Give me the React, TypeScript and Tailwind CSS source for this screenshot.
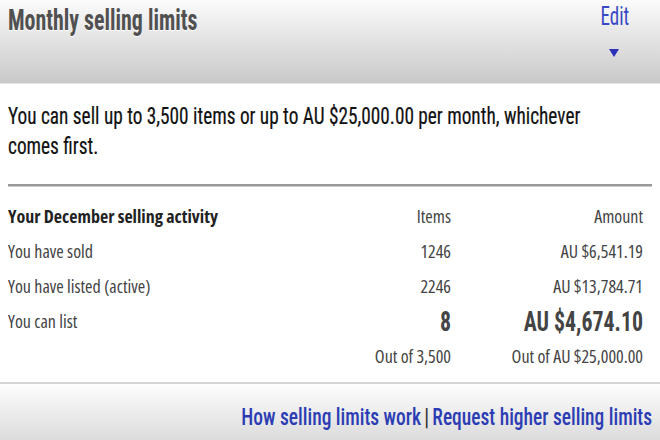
export default function App() {
  return (
    <div className="w-[660px] h-[440px] bg-white flex flex-col overflow-hidden font-['Roboto_Condensed','Roboto',sans-serif]">
      <div className="h-[84px] shrink-0 bg-gradient-to-b from-[#fbfbfb] to-[#c9c9c9] border-b border-[#e4e4e4] flex justify-between pl-2 pr-[26px]">
        <div className="pt-[2px] text-[30px] leading-[36px] font-bold text-[#505050] [text-shadow:0_1px_0_#fff]">
          <span className="inline-block origin-left scale-x-[0.73]">Monthly selling limits</span>
        </div>
        <div className="flex flex-col items-center pt-[3px]">
          <span className="inline-block scale-x-[0.76] text-[25px] leading-[28px] text-[#3747c4]">Edit</span>
          <svg width="10" height="8" viewBox="0 0 10 8" className="mt-[18px] -ml-[3px]">
            <polygon points="0,0 10,0 5,8" fill="#2a30b8" />
          </svg>
        </div>
      </div>
      <div className="px-2 pt-[17px]">
        <div className="w-[730px] origin-left scale-x-[0.803] text-[24px] leading-[30px] text-[#111] [-webkit-text-stroke:0.2px_#111]">
          You can sell up to 3,500 items or up to AU $25,000.00 per month, whichever comes first.
        </div>
      </div>
      <div className="mx-2 mt-[23px] h-[3px] bg-[#999] border-b border-[#ccc]" />
      <div className="grid grid-cols-[1fr_90px_192px] pl-2 pr-[17px] pt-[12px] font-['Open_Sans',sans-serif] font-stretch-75% text-[18px] leading-[35px] text-[#444]">
        <div className="font-bold text-[#222]">Your December selling activity</div>
        <div className="text-right">Items</div>
        <div className="text-right">Amount</div>
        <div>You have sold</div>
        <div className="text-right">1246</div>
        <div className="text-right">AU $6,541.19</div>
        <div>You have listed (active)</div>
        <div className="text-right">2246</div>
        <div className="text-right">AU $13,784.71</div>
        <div>You can list</div>
        <div className="text-right font-['Roboto_Condensed',sans-serif] font-bold text-[28px]">
          <span className="inline-block origin-right scale-x-[0.78]">8</span>
        </div>
        <div className="text-right font-['Roboto_Condensed',sans-serif] font-bold text-[28px]">
          <span className="inline-block origin-right scale-x-[0.78]">AU $4,674.10</span>
        </div>
        <div />
        <div className="text-right">Out of 3,500</div>
        <div className="text-right">Out of AU $25,000.00</div>
      </div>
      <div className="mt-auto h-[2px] bg-[#d4d4d4]" />
      <div className="h-[56px] shrink-0 bg-gradient-to-b from-[#fdfdfd] to-[#dcdcdc] flex justify-end items-center pt-[9px] pr-2 text-[24px] font-medium text-[#2b3cb4]">
        <span className="inline-block origin-right scale-x-[0.81] whitespace-nowrap">
          <span>How selling limits work</span>
          <span className="px-[4px] text-[#333]">|</span>
          <span>Request higher selling limits</span>
        </span>
      </div>
    </div>
  );
}
